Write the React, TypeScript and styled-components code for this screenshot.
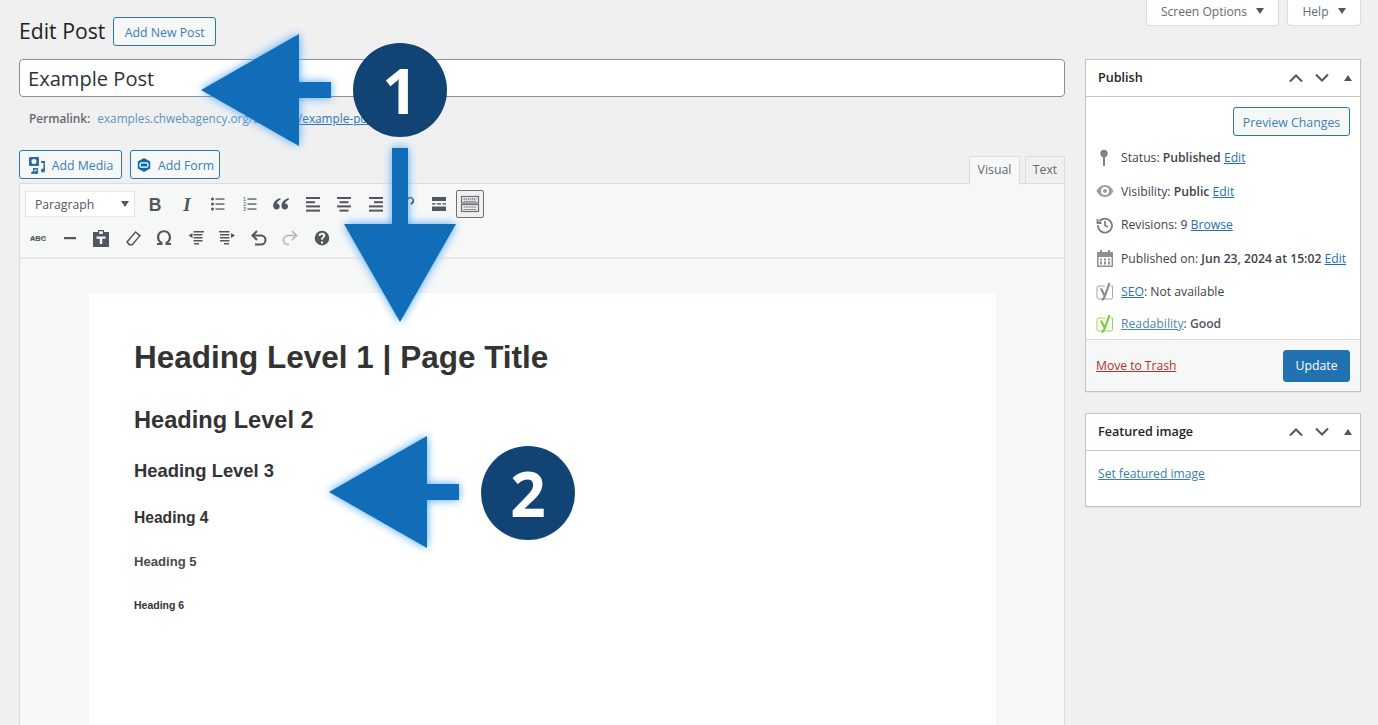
import React from "react";
import styled, { createGlobalStyle } from "styled-components";

const Global = createGlobalStyle`
  html, body { margin: 0; padding: 0; height: 100%; background: #f0f0f1; overflow: hidden; }
  body { font-family: "Open Sans", "Noto Sans", sans-serif; color: #3c434a; }
  * { box-sizing: border-box; }
  #root { height: 100%; }
`;
const Page = styled.div`
  position: relative; width: 1378px; height: 725px; overflow: hidden;
  background: #f0f0f1; font-size: 12.3px;
`;
const TopTabs = styled.div`
  display: flex; justify-content: flex-end; gap: 8px; padding-right: 17px; height: 26px;
`;
const TopTab = styled.button<{ $w: number }>`
  width: ${p => p.$w}px; height: 27px; margin-top: -1px; padding: 0 0 2px; background: #fff; border: 1px solid #dcdcde; border-top: 0;
  border-radius: 0 0 4px 4px; color: #646970; font: inherit; font-size: 12.1px; display: flex; align-items: center; justify-content: center; gap: 9px;
`;
const Caret = styled.i`
  width: 0; height: 0; border-left: 4px solid transparent; border-right: 4px solid transparent;
  border-top: 6px solid #50575e; display: block;
`;
const Columns = styled.div`
  display: flex; gap: 20px; padding: 0 17px 0 19px; margin-top: -9px;
`;
const Left = styled.div` width: 1046px; flex: none; `;
const Right = styled.div` width: 276px; flex: none; padding-top: 42px; display: flex; flex-direction: column; gap: 21px; `;
const HeadRow = styled.div` display: flex; align-items: center; gap: 8px; height: 29px; `;
const H1 = styled.h1` margin: 0; padding-bottom: 2px; font-size: 21.2px; font-weight: 400; color: #1d2327; line-height: 27px; white-space: nowrap; `;
const Btn = styled.button<{ $w?: number }>`
  display: inline-flex; align-items: center; justify-content: center; gap: 6px; height: 29px; padding: 1px 0 0;
  ${p => p.$w ? `width:${p.$w}px;` : ""} flex: none;
  background: #f6f7f7; border: 1px solid #2f76ab; border-radius: 3px; color: #3a7fb6; font: inherit; white-space: nowrap;
  svg { margin-top: -1px; }
`;
const TitleInput = styled.div`
  margin-top: 13px; height: 38px; background: #fff; border: 1px solid #8c8f94; border-radius: 4px;
  font-size: 20.1px; line-height: 38px; padding-left: 8px; color: #2c3338;
`;
const Permalink = styled.div`
  height: 21px; margin-top: 10px; padding-left: 10px; display: flex; align-items: center; gap: 7px; color: #646970; white-space: nowrap; font-size: 11.8px;
  b { font-weight: 600; }
  span { color: #5a94c2; }
  u { color: #2f77b2; }
`;
const MediaRow = styled.div` display: flex; gap: 8px; margin-top: 22px; align-items: flex-start; position: relative; `;
const EditorTabs = styled.div`
  position: absolute; right: 0; top: 6px; display: flex; gap: 5px; align-items: flex-start;
`;
const EditorTab = styled.div<{ $active?: boolean; $w: number }>`
  width: ${p => p.$w}px; height: ${p => p.$active ? 29 : 28}px; border: 1px solid #dcdcde;
  border-bottom: ${p => p.$active ? "0" : "1px solid #dcdcde"};
  padding-bottom: ${p => p.$active ? 3 : 2}px;
  background: ${p => p.$active ? "#f6f7f7" : "#f0f0f1"}; color: #646970;
  display: flex; align-items: center; justify-content: center; position: relative; z-index: 1;
`;
const Editor = styled.div`
  margin-top: 4px; border: 1px solid #dcdcde; background: #f6f7f7; height: 600px;
  border-width: 1px 1px 0 1px;
`;
const Toolbar = styled.div`
  height: 75px; border-bottom: 2px solid #e8e9e9; padding: 6px 0 0 5px; display: flex; flex-direction: column;
`;
const ToolRow = styled.div<{ $shift?: number }>`
  display: flex; align-items: center; height: 28px; margin-left: ${p => p.$shift ?? 0}px;
  & + & { margin-top: 6px; }
`;
const FormatSelect = styled.div`
  width: 110px; height: 26px; background: #fff; border: 1px solid #e6e7e8; display: flex; align-items: center;
  justify-content: space-between; padding: 0 5px 0 9px; color: #50575e; margin-right: 4.3px; font-size: 12.2px;
`;
const ToolIcon = styled.span<{ $on?: boolean }>`
  width: ${p => p.$on ? 28 : 31.5}px; height: 28px; display: flex; align-items: center; justify-content: center; flex: none;
  ${p => p.$on ? "border:1px solid #6b7075;border-radius:2px;background:#f0f0f1;margin-left:2px;" : ""}
  svg { display: block; }
`;
const Content = styled.div`
  margin: 34px 0 0 69px; width: 907px; height: 500px; background: #fff; padding: 44px 45px; color: #333;
  font-family: "Liberation Sans", Arial, sans-serif;
`;
const Heading = styled.div<{ $s: number; $mt?: number; $tone?: string }>`
  font-size: ${p => p.$s}px; font-weight: 700; height: 40px; line-height: 40px; white-space: nowrap;
  margin-top: ${p => p.$mt ?? 0}px; color: ${p => p.$tone ?? "#333"};
`;
const Box = styled.div` background: #fff; border: 1px solid #c3c4c7; box-shadow: 0 1px 1px rgba(0,0,0,.04); `;
const BoxHead = styled.div`
  height: 37px; border-bottom: 1px solid #c3c4c7; display: flex; align-items: center; justify-content: space-between; padding: 0 8px 2px 12px;
`;
const BoxTitle = styled.h2` margin: 0; font-size: 12.6px; font-weight: 600; color: #1d2327; `;
const BoxCtrls = styled.div` display: flex; align-items: center; gap: 12px; margin-top: 1px; svg { display: block; } svg:last-child { margin-left: 3px; } `;
const PublishBody = styled.div` padding: 10px 10px 0 10px; height: 242px; display: flex; flex-direction: column; `;
const PreviewRow = styled.div` display: flex; justify-content: flex-end; margin-bottom: 5px; `;
const Misc = styled.div<{ $h: number; $soft?: boolean }>`
  height: ${p => p.$h}px; display: flex; align-items: center; white-space: nowrap; color: #3c434a; font-size: 12.2px;
  b { font-weight: 600; color: ${p => p.$soft ? "#50575e" : "#3c434a"}; }
  a { color: ${p => p.$soft ? "#4a87b8" : "#2271b1"}; text-decoration: underline; }
`;
const MiscIcon = styled.span` width: 25px; flex: none; display: flex; justify-content: flex-start; svg { display:block; } `;
const BoxFoot = styled.div`
  height: 52px; background: #f6f7f7; border-top: 1px solid #dcdcde; display: flex; align-items: center; justify-content: space-between; padding: 0 10px;
  a { color: #b32d2e; text-decoration: underline; font-size: 12.1px; }
`;
const UpdateBtn = styled.button`
  width: 67px; height: 32px; background: #2271b1; border: 1px solid #2271b1; border-radius: 3px; color: #fff; font: inherit;
`;
const FeaturedBody = styled.div`
  height: 55px; padding: 14px 12px; font-size: 12.1px; a { color: #3a7fb6; text-decoration: underline; }
`;
const Overlay = styled.svg<{ $x: number; $y: number }>`
  position: absolute; left: ${p => p.$x}px; top: ${p => p.$y}px; overflow: visible;
  filter: drop-shadow(0 0 5px #4ba6f7);
`;
const Badge = styled.div<{ $x: number; $y: number }>`
  position: absolute; left: ${p => p.$x}px; top: ${p => p.$y}px; width: 94px; height: 94px; border-radius: 50%;
  background: #114375; color: #fff; font-size: 62px; font-weight: 700; display: flex; align-items: center; justify-content: center; line-height: 1;
`;

const Ico = ({ children, w = 20, h = 20, vb = "0 0 20 20", color = "#50575e" }: any) => (
  <svg width={w} height={h} viewBox={vb} fill={color}>{children}</svg>
);
const Bars = ({ rows }: { rows: [number, number][] }) => (
  <>{rows.map((r, i) => <rect key={i} x={r[0]} y={3 + i * 4.2} width={r[1]} height="2" />)}</>
);
const ListLines = () => (
  <>{[4.4, 9.4, 14.4].map(y => <rect key={y} x="7.500" y={y} width="9" height="1.300" />)}</>
);
const Up = () => <svg width="14" height="10" viewBox="0 0 14 10" fill="none" stroke="#50575e" strokeWidth="2"><path d="M1 8.500l6-6 6 6" /></svg>;
const Down = () => <svg width="14" height="10" viewBox="0 0 14 10" fill="none" stroke="#50575e" strokeWidth="2"><path d="M1 1.500l6 6 6-6" /></svg>;
const Tri = () => <svg width="8" height="6" viewBox="0 0 8 6" fill="#50575e"><path d="M0 6l4-6 4 6z" /></svg>;
const Ctrls = () => <BoxCtrls><Up /><Down /><Tri /></BoxCtrls>;
const YoastIcon = ({ box, mark }: { box: string; mark: string }) => (
  <svg width="19" height="19" viewBox="0 0 19 19" fill="none">
    <path d="M9 4H3a2 2 0 0 0-2 2v9a2 2 0 0 0 2 2h12a1.500 1.500 0 0 0 1.500-1.500V4h-2" stroke={box} strokeWidth="1" />
    <path d="M5 6.500l3.800 7.500M13.500 1L8.500 15c-.6 1.500-1.500 2.500-3 2.800" stroke={mark} strokeWidth="2.200" />
  </svg>
);

const row1 = [
  <Ico key="b"><text x="10" y="16.500" textAnchor="middle" fontFamily="Liberation Sans" fontWeight="700" fontSize="17.500">B</text></Ico>,
  <Ico key="i"><text x="10" y="16.500" textAnchor="middle" fontFamily="Liberation Serif" fontStyle="italic" fontWeight="700" fontSize="19">I</text></Ico>,
  <Ico key="ul"><circle cx="4.500" cy="5" r="1.500" /><circle cx="4.500" cy="10" r="1.500" /><circle cx="4.500" cy="15" r="1.500" /><ListLines /></Ico>,
  <Ico key="ol"><text x="3" y="7" fontSize="5.500" fontFamily="Liberation Sans">1</text><text x="3" y="12" fontSize="5.500" fontFamily="Liberation Sans">2</text><text x="3" y="17" fontSize="5.500" fontFamily="Liberation Sans">3</text><ListLines /></Ico>,
  <Ico key="q"><path d="M9.500 4C5 5.500 2.200 8 2.200 11.700c0 2.300 1.400 3.800 3.300 3.800 1.800 0 3.200-1.300 3.200-3 0-1.800-1.300-2.900-3-2.900.3-1.600 1.700-3 3.800-4.100zM17.800 4c-4.500 1.500-7.300 4-7.300 7.700 0 2.300 1.400 3.800 3.300 3.800 1.800 0 3.200-1.300 3.200-3 0-1.800-1.300-2.900-3-2.900.3-1.600 1.700-3 3.800-4.100z" /></Ico>,
  <Ico key="l"><Bars rows={[[3, 14], [3, 9], [3, 14], [3, 14]]} /></Ico>,
  <Ico key="c"><Bars rows={[[3, 14], [5.500, 9], [3, 14], [5.500, 9]]} /></Ico>,
  <Ico key="r"><Bars rows={[[3, 14], [8, 9], [3, 14], [3, 14]]} /></Ico>,
  <Ico key="lk"><path d="M11 3.500a4 4 0 0 1 5.500 5.500l-2 2-1.400-1.400 2-2a2 2 0 0 0-2.800-2.800l-2 2L8.900 5.400zM8 14.600l-1.500 1.500a4 4 0 0 1-5-5l2-2L5 10.500l-2 2" /></Ico>,
  <Ico key="m"><rect x="3" y="3" width="14" height="4" /><rect x="3" y="12.500" width="14" height="4.500" /><rect x="3" y="9.200" width="3.500" height="1.400" /><rect x="8" y="9.200" width="4" height="1.400" /><rect x="13.500" y="9.200" width="3.500" height="1.400" /></Ico>,
];
const row2 = [
  <Ico key="s"><text x="10" y="12.500" textAnchor="middle" fontFamily="Liberation Sans" fontWeight="700" fontSize="7" textLength="16" lengthAdjust="spacingAndGlyphs">ABC</text><rect x="2" y="9.700" width="16" height=".6" /></Ico>,
  <Ico key="hr"><rect x="4" y="9" width="12" height="2.200" /></Ico>,
  <Ico key="p"><path d="M2 4h5V2h6v2h5v15H2zM8.200 3.300V6h3.600V3.300zM5.500 8.500v2.300h3.300V16h2.400v-5.200h3.300V8.500z" fillRule="evenodd" /></Ico>,
  <Ico key="e"><path d="M12.500 3L18 7.500 9.500 17.500 6 17.500 3 14zM12.700 5L5 14l2 2 1.800 0 7-8z" fillRule="evenodd" /></Ico>,
  <Ico key="o"><path d="M3 17h5.500v-2.700C6.200 13.200 5.200 11.200 5.200 9.200c0-2.900 2-4.900 4.800-4.900s4.800 2 4.800 4.900c0 2-1 4-3.300 5.100V17H17v-2h-2.800c1.500-1.200 2.800-3.100 2.800-5.800 0-4.100-3-6.900-7-6.900s-7 2.800-7 6.900c0 2.700 1.300 4.600 2.800 5.800H3z" /></Ico>,
  <Ico key="ou"><path d="M2.500 7.500L6.500 5v5z" /><rect x="7.500" y="3" width="10.500" height="1.500" /><rect x="7.500" y="6" width="9" height="1.500" /><rect x="7.500" y="9" width="9" height="1.500" /><rect x="7.500" y="12" width="9" height="1.500" /><rect x="8" y="15" width="5" height="1.500" /></Ico>,
  <Ico key="in"><path d="M18 7.500L14 5v5z" /><rect x="2" y="3" width="10.500" height="1.500" /><rect x="3" y="6" width="9.500" height="1.500" /><rect x="3" y="9" width="9.500" height="1.500" /><rect x="3" y="12" width="9.500" height="1.500" /><rect x="7" y="15" width="5" height="1.500" /></Ico>,
  <svg key="u" width="20" height="20" viewBox="0 0 20 20" fill="none" stroke="#50575e" strokeWidth="2"><path d="M8 3L3.500 7.500 8 12" /><path d="M4 7.500h8a4.500 4.500 0 0 1 0 9H6" /></svg>,
  <svg key="rd" width="20" height="20" viewBox="0 0 20 20" fill="none" stroke="#b4b7ba" strokeWidth="1.700"><path d="M12 3l4.500 4.500L12 12" /><path d="M16 7.500H8a4.500 4.500 0 0 0 0 9h1" /></svg>,
  <Ico key="h"><path fillRule="evenodd" d="M10 2.800a7.300 7.300 0 1 1 0 14.600 7.300 7.300 0 0 1 0-14.600zM9 13.500v2h2v-2zM10 4.800c-2 0-3.300 1-3.500 2.900l2 .2c.1-.8.600-1.200 1.400-1.200s1.200.400 1.200 1c0 1.300-2.200 1.500-2.200 4h2c0-1.800 2.400-2 2.400-4.200 0-1.800-1.200-2.700-2.800-2.700z" /></Ico>,
];

function Arrow1() {
  return <Overlay $x={201} $y={34} width="130" height="112" viewBox="0 0 130 112"><path d="M0 56L98 0v48h32v16H98v48z" fill="#126db8" /></Overlay>;
}
function ArrowDown() {
  return <Overlay $x={344} $y={148} width="112" height="174" viewBox="0 0 112 174"><path d="M48 0h16v76h48L56 174 0 76h48z" fill="#126db8" /></Overlay>;
}
function Arrow2() {
  return <Overlay $x={329} $y={436} width="130" height="112" viewBox="0 0 130 112"><path d="M0 56L98 0v48h32v16H98v48z" fill="#126db8" /></Overlay>;
}

export default function App() {
  return (
    <Page>
      <Global />
      <TopTabs>
        <TopTab $w={133}>Screen Options <Caret /></TopTab>
        <TopTab $w={74}>Help <Caret /></TopTab>
      </TopTabs>
      <Columns>
        <Left>
          <HeadRow>
            <H1>Edit Post</H1>
            <Btn $w={103}>Add New Post</Btn>
          </HeadRow>
          <TitleInput>Example Post</TitleInput>
          <Permalink><b>Permalink:</b> <span>examples.chwebagency.org/2024/06<u>/example-post</u>/</span></Permalink>
          <MediaRow>
            <Btn $w={103}>
              <svg width="18" height="18" viewBox="0 0 18 18" fill="#2a6f9f"><path fillRule="evenodd" d="M2 1h8a1 1 0 0 1 1 1v7a1 1 0 0 1-1 1H2a1 1 0 0 1-1-1V2a1 1 0 0 1 1-1zm4 2a2.500 2.500 0 1 0 0 5 2.500 2.500 0 0 0 0-5z" /><path d="M13 5h4v9.500a2 2 0 1 1-1.500-2V7H13zM5 12h5v4.500a1.700 1.700 0 1 1-1.300-1.600V13.500H6.500v3.500a1.700 1.700 0 1 1-1.500-1.600z" /></svg>
              Add Media
            </Btn>
            <Btn $w={90}>
              <svg width="16" height="16" viewBox="0 0 16 16"><path d="M8 1l6.200 3.500v7L8 15l-6.200-3.500v-7z" fill="#0e6ba8" /><rect x="4" y="5.800" width="8" height="4.400" rx="1.500" fill="none" stroke="#fff" strokeWidth="1.300" /></svg>
              Add Form
            </Btn>
            <EditorTabs>
              <EditorTab $active $w={51}>Visual</EditorTab>
              <EditorTab $w={40}>Text</EditorTab>
            </EditorTabs>
          </MediaRow>
          <Editor>
            <Toolbar>
              <ToolRow>
                <FormatSelect>Paragraph <Caret /></FormatSelect>
                {row1.map((c, i) => <ToolIcon key={i}>{c}</ToolIcon>)}
                <ToolIcon $on>
                  <svg width="20" height="18" viewBox="0 0 20 18" fill="none" stroke="#6b6f78"><rect x="1.500" y="1.500" width="17" height="6.500" strokeWidth="1.200" /><rect x="1.500" y="9.500" width="17" height="7" strokeWidth="1.200" /><path d="M3.500 4h13" strokeDasharray="1.300 .8" strokeWidth="1.400" /><path d="M3.500 6.300h13M3.500 12h13M3.500 14.500h13" strokeWidth="1" strokeDasharray="2 .6" /></svg>
                </ToolIcon>
              </ToolRow>
              <ToolRow $shift={-2.500}>{row2.map((c, i) => <ToolIcon key={i}>{c}</ToolIcon>)}</ToolRow>
            </Toolbar>
            <Content>
              <Heading $s={31.500}>Heading Level 1 | Page Title</Heading>
              <Heading $s={23.600} $mt={23}>Heading Level 2</Heading>
              <Heading $s={18.400} $mt={11}>Heading Level 3</Heading>
              <Heading $s={15.600} $mt={7}>Heading 4</Heading>
              <Heading $s={13.100} $mt={4} $tone="#4a4a4a">Heading 5</Heading>
              <Heading $s={10.500} $mt={3}>Heading 6</Heading>
            </Content>
          </Editor>
        </Left>
        <Right>
          <Box>
            <BoxHead><BoxTitle>Publish</BoxTitle><Ctrls /></BoxHead>
            <PublishBody>
              <PreviewRow><Btn $w={117}>Preview Changes</Btn></PreviewRow>
              <Misc $h={33}><MiscIcon><svg width="16" height="18" viewBox="0 0 16 18" fill="#7f8388"><circle cx="8" cy="4.500" r="3.700" /><rect x="7" y="7" width="2" height="10" /></svg></MiscIcon>Status:&nbsp;<b>Published</b>&nbsp;<a>Edit</a></Misc>
              <Misc $h={34}><MiscIcon><svg width="18" height="14" viewBox="0 0 18 14" fill="#9a9da1"><path fillRule="evenodd" d="M9 1c4 0 7 3 8.500 6C16 10 13 13 9 13S2 10 .5 7C2 4 5 1 9 1zm0 2a4 4 0 1 0 0 8 4 4 0 0 0 0-8zm0 2a2 2 0 1 1 0 4 2 2 0 0 1 0-4z" /></svg></MiscIcon>Visibility:&nbsp;<b>Public</b>&nbsp;<a>Edit</a></Misc>
              <Misc $h={33}><MiscIcon><svg width="18" height="18" viewBox="0 0 18 18" fill="none" stroke="#7a7e83" strokeWidth="1.800"><path d="M3.300 5.500A7 7 0 1 1 2 9" /><path d="M1.500 3v4h4M9 5v4.500l3 1.500" /></svg></MiscIcon>Revisions:&nbsp;9&nbsp;<a>Browse</a></Misc>
              <Misc $h={34}><MiscIcon><svg width="18" height="18" viewBox="0 0 18 18" fill="#8c8f94"><path fillRule="evenodd" d="M1 3h3V1h2v2h6V1h2v2h3v15H1zm1.500 5v8.500h13V8zM4 9.500h2v2H4zm0 3h2v3H4zm4-3h2v2H8zm0 3h2v3H8zm4-3h2v2h-2zm0 3h2v3h-2z" /></svg></MiscIcon>Published on:&nbsp;<b>Jun 23, 2024 at 15:02</b>&nbsp;<a>Edit</a></Misc>
              <Misc $h={33}><MiscIcon><YoastIcon box="#a4a7aa" mark="#8a8d91" /></MiscIcon><a>SEO</a>:&nbsp;Not available</Misc>
              <Misc $h={31} $soft><MiscIcon><YoastIcon box="#9ad45f" mark="#7ad03a" /></MiscIcon><a>Readability</a>:&nbsp;<b>Good</b></Misc>
            </PublishBody>
            <BoxFoot><a>Move to Trash</a><UpdateBtn>Update</UpdateBtn></BoxFoot>
          </Box>
          <Box>
            <BoxHead><BoxTitle>Featured image</BoxTitle><Ctrls /></BoxHead>
            <FeaturedBody><a>Set featured image</a></FeaturedBody>
          </Box>
        </Right>
      </Columns>
      <Arrow1 />
      <Badge $x={353} $y={43}>1</Badge>
      <ArrowDown />
      <Arrow2 />
      <Badge $x={481} $y={446}>2</Badge>
    </Page>
  );
}
